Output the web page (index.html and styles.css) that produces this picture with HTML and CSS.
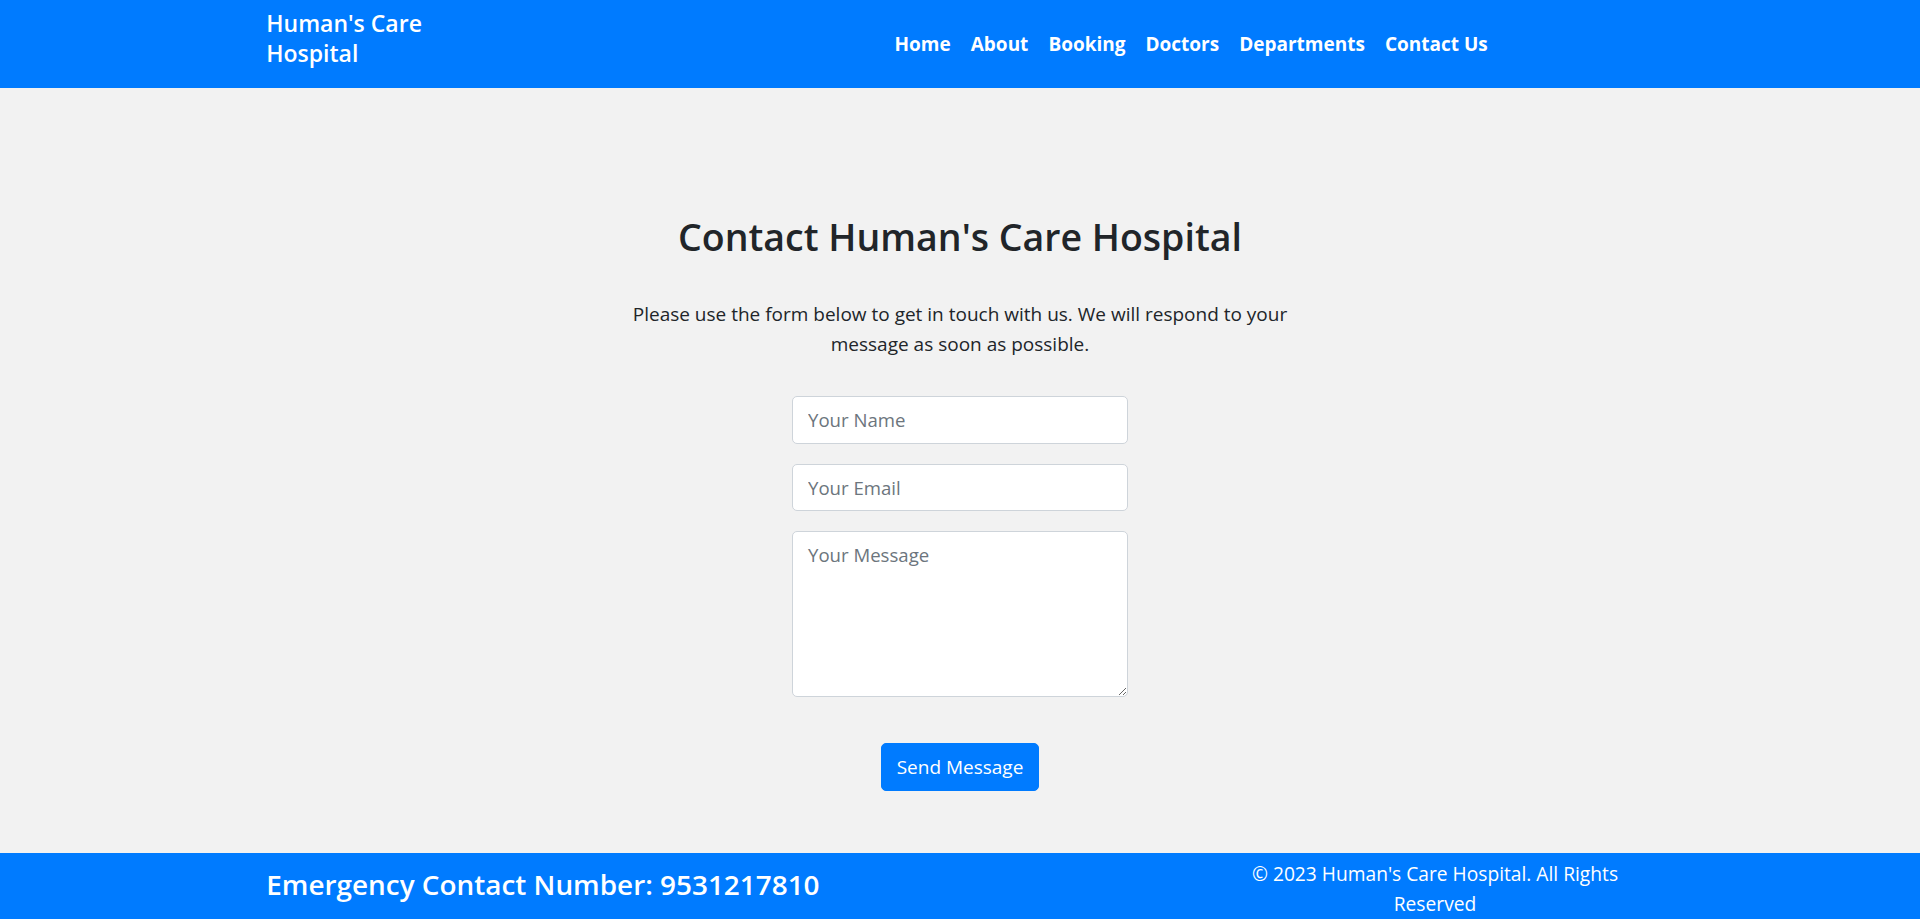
FILE: index.html
```html
<!DOCTYPE html>
<html lang="en">
<head>
<meta charset="utf-8">
<title>Contact - Human's Care Hospital</title>
<link rel="stylesheet" href="styles.css">
</head>
<body>
<header class="site-header">
  <div class="container header-inner">
    <a class="brand" href="#">Human's Care Hospital</a>
    <nav class="main-nav">
      <ul class="nav-list">
        <li><a class="nav-link" href="#">Home</a></li>
        <li><a class="nav-link" href="#">About</a></li>
        <li><a class="nav-link" href="#">Booking</a></li>
        <li><a class="nav-link" href="#">Doctors</a></li>
        <li><a class="nav-link" href="#">Departments</a></li>
        <li><a class="nav-link" href="#">Contact Us</a></li>
      </ul>
    </nav>
  </div>
</header>
<main class="contact">
  <div class="container contact-inner">
    <h2 class="contact-title">Contact Human's Care Hospital</h2>
    <p class="contact-lead">Please use the form below to get in touch with us. We will respond to your message as soon as possible.</p>
    <form class="contact-form">
      <div class="form-group"><input class="form-control" type="text" placeholder="Your Name"></div>
      <div class="form-group"><input class="form-control" type="email" placeholder="Your Email"></div>
      <div class="form-group"><textarea class="form-control message" placeholder="Your Message"></textarea></div>
      <button class="btn-send" type="submit">Send Message</button>
    </form>
  </div>
</main>
<footer class="site-footer">
  <div class="container footer-row">
    <div class="footer-left"><h4 class="emergency">Emergency Contact Number: 9531217810</h4></div>
    <div class="footer-right"><p class="copyright">© 2023 Human's Care Hospital. All Rights Reserved</p></div>
  </div>
</footer>
</body>
</html>
```
FILE: styles.css
```css
* { box-sizing: border-box; }
html, body { margin: 0; padding: 0; }
body {
  font-family: "Open Sans", "Noto Sans", sans-serif;
  font-size: 19px;
  line-height: 30px;
  color: #212529;
  background: #f2f2f2;
}
.container {
  width: 1425px;
  margin: 0 auto;
  padding: 0 18.75px;
}
.site-header {
  background: #007bff;
  height: 88px;
}
.header-inner {
  display: flex;
  align-items: flex-start;
  height: 88px;
}
.brand {
  display: block;
  width: 170px;
  padding-top: 8px;
  font-size: 23px;
  line-height: 30px;
  font-weight: 600;
  color: #fff;
  text-decoration: none;
}
.main-nav {
  margin-left: auto;
  margin-right: 156px;
  align-self: center;
}
.nav-list {
  list-style: none;
  margin: 0;
  padding: 0;
  display: flex;
}
.nav-link {
  display: block;
  padding: 10px 10px;
  font-size: 19px;
  line-height: 30px;
  font-weight: 700;
  color: #fff;
  text-decoration: none;
}
.contact {
  padding: 125px 0 62px;
}
.contact-inner {
  text-align: center;
}
.contact-title {
  margin: 0 0 37.5px;
  font-size: 37.5px;
  line-height: 48px;
  font-weight: 600;
}
.contact-lead {
  max-width: 700px;
  margin: 0 auto 37.5px;
}
.contact-form {
  width: 336px;
  margin: 0 auto;
}
.form-group {
  margin-bottom: 20px;
}
.form-control {
  display: block;
  width: 100%;
  height: 47.5px;
  padding: 7.5px 15px;
  font-family: inherit;
  font-size: 18.6px;
  line-height: 30px;
  color: #495057;
  background: #fff;
  border: 1.25px solid #ced4da;
  border-radius: 5px;
}
.form-control::placeholder { color: #6c757d; opacity: 1; }
.message {
  height: 166px;
  resize: vertical;
}
.btn-send {
  margin-top: 26px;
  height: 47.5px;
  padding: 7.5px 15px;
  font-family: inherit;
  font-size: 19px;
  line-height: 30px;
  color: #fff;
  background: #007bff;
  border: 1.25px solid #007bff;
  border-radius: 5px;
}
.site-footer {
  background: #007bff;
  color: #fff;
  padding: 6px 0 10px;
}
.footer-row {
  display: grid;
  grid-template-columns: 1fr 437.5px;
  column-gap: 37.5px;
  align-items: center;
}
.emergency {
  margin: 0 0 10px;
  font-size: 27.9px;
  line-height: 36px;
  font-weight: 600;
}
.copyright {
  margin: 0;
  font-size: 19.2px;
  text-align: center;
}
```
